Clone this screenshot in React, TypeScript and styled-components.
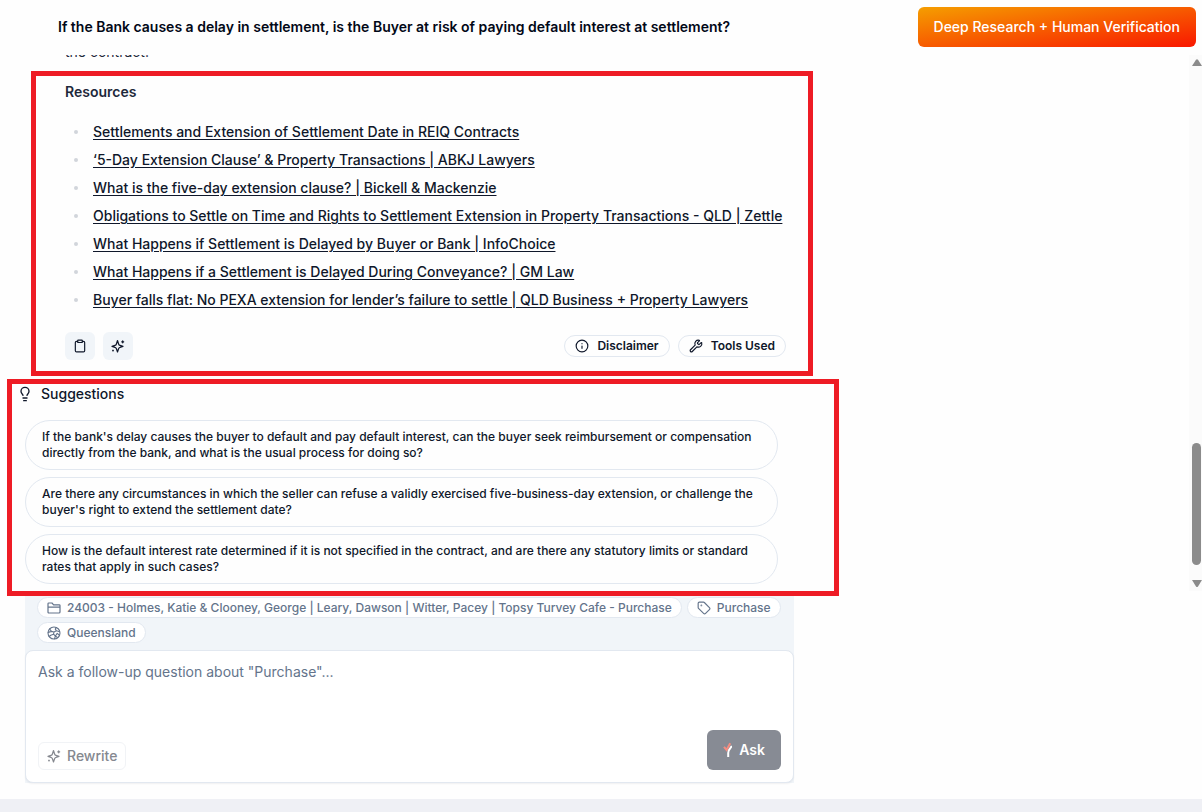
import React from "react";
import styled, { createGlobalStyle } from "styled-components";
import { Clipboard, Folder, Info, Lightbulb, Tag, Wrench } from "lucide-react";

const GlobalStyle = createGlobalStyle`
  *, *::before, *::after { box-sizing: border-box; }
  body {
    margin: 0;
    background: #fefefe;
    color: #0f172a;
    font-family: Inter, "Liberation Sans", sans-serif;
    font-size: 14px;
    line-height: 20px;
  }
  button, textarea { font: inherit; color: inherit; }
  button { cursor: pointer; }
`;

const Page = styled.div`
  display: flex;
  flex-direction: column;
  min-height: 100vh;
`;

const Header = styled.header`
  display: flex;
  align-items: center;
  justify-content: space-between;
  gap: 24px;
  padding: 7px 6px 8px 58px;
`;

const Title = styled.h1`
  margin: 0;
  font-size: 14px;
  font-weight: 600;
  color: #020817;
`;

const ResearchButton = styled.button`
  height: 40px;
  padding: 0 16px;
  border: 0;
  border-radius: 6px;
  background: linear-gradient(to bottom right, #f59e00, #f91800);
  color: #fff;
  font-weight: 450;
  white-space: nowrap;
`;

const ScrollRow = styled.div`
  display: flex;
  justify-content: space-between;
`;

const Conversation = styled.main`
  flex: 1;
  max-width: 839px;
  padding-left: 7px;
`;

const Excerpt = styled.div`
  display: flex;
  align-items: flex-end;
  height: 7px;
  margin: 0 0 9px 58px;
  overflow: hidden;
  color: #1e293b;
`;

const Highlight = styled.section`
  border: 5px solid #ee1c25;
`;

const Answer = styled(Highlight)`
  margin: 0 26px 3px 24px;
  padding: 6px 22px 11px 29px;
`;

const AnswerHeading = styled.h2`
  margin: 0 0 16px;
  font-size: 14px;
  font-weight: 600;
  color: #1e293b;
`;

const LinkList = styled.ul`
  display: flex;
  flex-direction: column;
  margin: 0;
  padding: 4px 0 0;
  gap: 8px;
  list-style: none;
`;

const LinkItem = styled.li`
  display: flex;
  align-items: center;
  gap: 15px;
  padding-left: 9px;
  white-space: nowrap;

  &::before {
    content: "";
    width: 4px;
    height: 4px;
    border-radius: 50%;
    background: #d1d5db;
  }
`;

const ResourceLink = styled.a`
  color: #0f172a;
  font-weight: 450;
  text-decoration: underline;
  text-underline-offset: 2px;
`;

const AnswerFooter = styled.div`
  display: flex;
  align-items: center;
  justify-content: space-between;
  margin-top: 22px;
`;

const Group = styled.div`
  display: flex;
  gap: 8px;
`;

const IconButton = styled.button`
  display: grid;
  place-items: center;
  width: 30px;
  height: 28px;
  padding: 0;
  border: 0;
  border-radius: 6px;
  background: #f1f5f9;
`;

const PillButton = styled.button`
  display: flex;
  align-items: center;
  gap: 8px;
  height: 22px;
  padding: 0 10px;
  border: 1px solid #e2e8f0;
  border-radius: 11px;
  background: transparent;
  font-size: 12px;
  font-weight: 600;
`;

const SuggestionPanel = styled(Highlight)`
  padding: 0 56px 7px 5px;
`;

const SuggestionHeading = styled.h2`
  display: flex;
  align-items: center;
  gap: 8px;
  margin: 0 0 16px;
  font-size: 14px;
  font-weight: 500;
`;

const SuggestionList = styled.div`
  display: flex;
  flex-direction: column;
  gap: 7px;
  padding-left: 8px;
`;

const Suggestion = styled.button`
  padding: 8px 16px;
  border: 1px solid #e2e8f0;
  border-radius: 25px;
  background: transparent;
  font-size: 12px;
  font-weight: 450;
  line-height: 16px;
  text-align: left;
`;

const Scrollbar = styled.div`
  display: flex;
  flex-direction: column;
  align-items: flex-end;
  width: 13px;
  margin-bottom: 5px;
  padding: 4px 0;
  background: #fbfbfb;
`;

const Track = styled.div`
  display: flex;
  flex: 1;
  flex-direction: column;
  justify-content: flex-end;
  padding: 0 1px 15px 0;
`;

const Thumb = styled.div`
  width: 9px;
  height: 122px;
  border-radius: 5px;
  background: #8b8b8b;
`;

const Composer = styled.form`
  width: calc(100% - 25px);
  max-width: 769px;
  margin: 0 0 16px 25px;
  background: #f1f5f9;
`;

const Chips = styled.div`
  display: flex;
  flex-wrap: wrap;
  gap: 4px 5px;
  padding: 1px 12px 7px;
`;

const Chip = styled.span`
  display: flex;
  align-items: center;
  gap: 6px;
  height: 21px;
  padding: 0 9px;
  border: 1px solid #e2e8f0;
  border-radius: 11px;
  background: #fff;
  color: #64748b;
  font-size: 12px;
  font-weight: 500;
  white-space: nowrap;
`;

const InputCard = styled.div`
  display: flex;
  flex-direction: column;
  padding: 11px 12px 12px;
  border: 1px solid #e2e8f0;
  border-radius: 8px;
  background: #fff;
  box-shadow: 0 1px 2px rgba(15, 23, 42, 0.06);
`;

const Question = styled.textarea`
  height: 68px;
  padding: 0;
  border: 0;
  outline: 0;
  background: transparent;
  resize: none;

  &::placeholder { color: #64748b; opacity: 1; }
`;

const Actions = styled.div`
  display: flex;
  align-items: flex-end;
  justify-content: space-between;
`;

const RewriteButton = styled.button`
  display: flex;
  align-items: center;
  gap: 6px;
  height: 28px;
  padding: 0 8px;
  border: 1px solid #f1f3f6;
  border-radius: 6px;
  background: transparent;
  color: #85888f;
  font-weight: 500;
`;

const AskButton = styled.button`
  display: flex;
  align-items: center;
  gap: 6px;
  height: 40px;
  padding: 0 16px;
  border: 0;
  border-radius: 6px;
  background: #878b94;
  color: #fff;
  font-weight: 600;
`;

const BottomStrip = styled.footer`
  flex: 1;
  min-height: 13px;
  background: #eff0f5;
`;

const resources = [
  "Settlements and Extension of Settlement Date in REIQ Contracts",
  "‘5-Day Extension Clause’ & Property Transactions | ABKJ Lawyers",
  "What is the five-day extension clause? | Bickell & Mackenzie",
  "Obligations to Settle on Time and Rights to Settlement Extension in Property Transactions - QLD | Zettle",
  "What Happens if Settlement is Delayed by Buyer or Bank | InfoChoice",
  "What Happens if a Settlement is Delayed During Conveyance? | GM Law",
  "Buyer falls flat: No PEXA extension for lender’s failure to settle | QLD Business + Property Lawyers",
];

const suggestions = [
  "If the bank's delay causes the buyer to default and pay default interest, can the buyer seek reimbursement or compensation directly from the bank, and what is the usual process for doing so?",
  "Are there any circumstances in which the seller can refuse a validly exercised five-business-day extension, or challenge the buyer's right to extend the settlement date?",
  "How is the default interest rate determined if it is not specified in the contract, and are there any statutory limits or standard rates that apply in such cases?",
];

const SparkleIcon = () => (
  <svg width="14" height="14" viewBox="0 0 14 14" fill="none" stroke="currentColor" strokeWidth="1.2" strokeLinejoin="round" strokeLinecap="round" aria-hidden="true">
    <path d="M6.5 1.5 7.6 5Q7.9 6.1 9 6.4L12 7.4 9 8.4Q7.9 8.7 7.6 9.8L6.5 13 5.4 9.8Q5.1 8.7 4 8.4L1 7.4 4 6.4Q5.1 6.1 5.4 5Z" />
    <path d="M11.7 1.8v2M10.7 2.8h2M2 11.2v.8M1.6 11.6h.8" />
  </svg>
);

const GlobeIcon = () => (
  <svg width="14" height="14" viewBox="0 0 14 14" fill="none" stroke="currentColor" strokeWidth="1.1" strokeLinejoin="round" strokeLinecap="round" aria-hidden="true">
    <circle cx="7" cy="7" r="6" />
    <path d="M2.6 3 4.5 5.4 7 6 9.4 4.8 8.3 3.1 9.3 1.5M4.5 5.4 1.2 6.4M7 6 6.5 8.2 3.8 9.2 2.2 10.5M6.5 8.2 8.4 10 7.5 12.8M9.4 4.8 12.7 5.7M12.5 9.2 10.2 7.4 8.4 10 10.6 11.6" />
  </svg>
);

const FolderIcon = () => (
  <svg width="14" height="14" viewBox="0 0 14 14" fill="none" stroke="currentColor" strokeWidth="1.2" strokeLinejoin="round" aria-hidden="true">
    <path d="M1 11V2.8Q1 2 1.8 2H5l1.6 1.8h5.6q.8 0 .8.8V11q0 1-1 1H2q-1 0-1-1ZM1 6.2h12" />
  </svg>
);

const AskLogo = () => (
  <svg width="10" height="16" viewBox="0 0 10 16" fill="none" strokeWidth="2" aria-hidden="true">
    <path d="M1 4.8 3.6 8 7.2 1.2" stroke="#f58c80" />
    <path d="M9 4.8H8.2Q5.2 8.4 5.2 11v4" stroke="#fff" />
  </svg>
);

const Arrow = ({ down = false }: { down?: boolean }) => (
  <svg width="10" height="7" viewBox="0 0 10 7" fill="#8b8b8b" aria-hidden="true">
    <path d={down ? "M0 0h10L6 6.4Q5 7.4 4 6.4Z" : "M0 7h10L6 .8Q5-.4 4 .8Z"} />
  </svg>
);

export default function App() {
  return (
    <Page>
      <GlobalStyle />
      <Header>
        <Title>If the Bank causes a delay in settlement, is the Buyer at risk of paying default interest at settlement?</Title>
        <ResearchButton type="button">Deep Research + Human Verification</ResearchButton>
      </Header>
      <ScrollRow>
        <Conversation>
          <Excerpt>the contract.</Excerpt>
          <Answer>
            <AnswerHeading>Resources</AnswerHeading>
            <LinkList>
              {resources.map((name) => (
                <LinkItem key={name}>
                  <ResourceLink href="#">{name}</ResourceLink>
                </LinkItem>
              ))}
            </LinkList>
            <AnswerFooter>
              <Group>
                <IconButton type="button" aria-label="Copy answer"><Clipboard size={14} /></IconButton>
                <IconButton type="button" aria-label="Improve answer"><SparkleIcon /></IconButton>
              </Group>
              <Group>
                <PillButton type="button"><Info size={14} />Disclaimer</PillButton>
                <PillButton type="button"><Wrench size={14} />Tools Used</PillButton>
              </Group>
            </AnswerFooter>
          </Answer>
          <SuggestionPanel>
            <SuggestionHeading><Lightbulb size={16} />Suggestions</SuggestionHeading>
            <SuggestionList>
              {suggestions.map((text) => (
                <Suggestion type="button" key={text}>{text}</Suggestion>
              ))}
            </SuggestionList>
          </SuggestionPanel>
        </Conversation>
        <Scrollbar aria-hidden="true">
          <Arrow />
          <Track><Thumb /></Track>
          <Arrow down />
        </Scrollbar>
      </ScrollRow>
      <Composer>
        <Chips>
          <Chip><FolderIcon />24003 - Holmes, Katie &amp; Clooney, George | Leary, Dawson | Witter, Pacey | Topsy Turvey Cafe - Purchase</Chip>
          <Chip><Tag size={14} />Purchase</Chip>
          <Chip><GlobeIcon />Queensland</Chip>
        </Chips>
        <InputCard>
          <Question aria-label="Follow-up question" placeholder={'Ask a follow-up question about "Purchase"...'} />
          <Actions>
            <RewriteButton type="button"><SparkleIcon />Rewrite</RewriteButton>
            <AskButton type="submit"><AskLogo />Ask</AskButton>
          </Actions>
        </InputCard>
      </Composer>
      <BottomStrip />
    </Page>
  );
}
